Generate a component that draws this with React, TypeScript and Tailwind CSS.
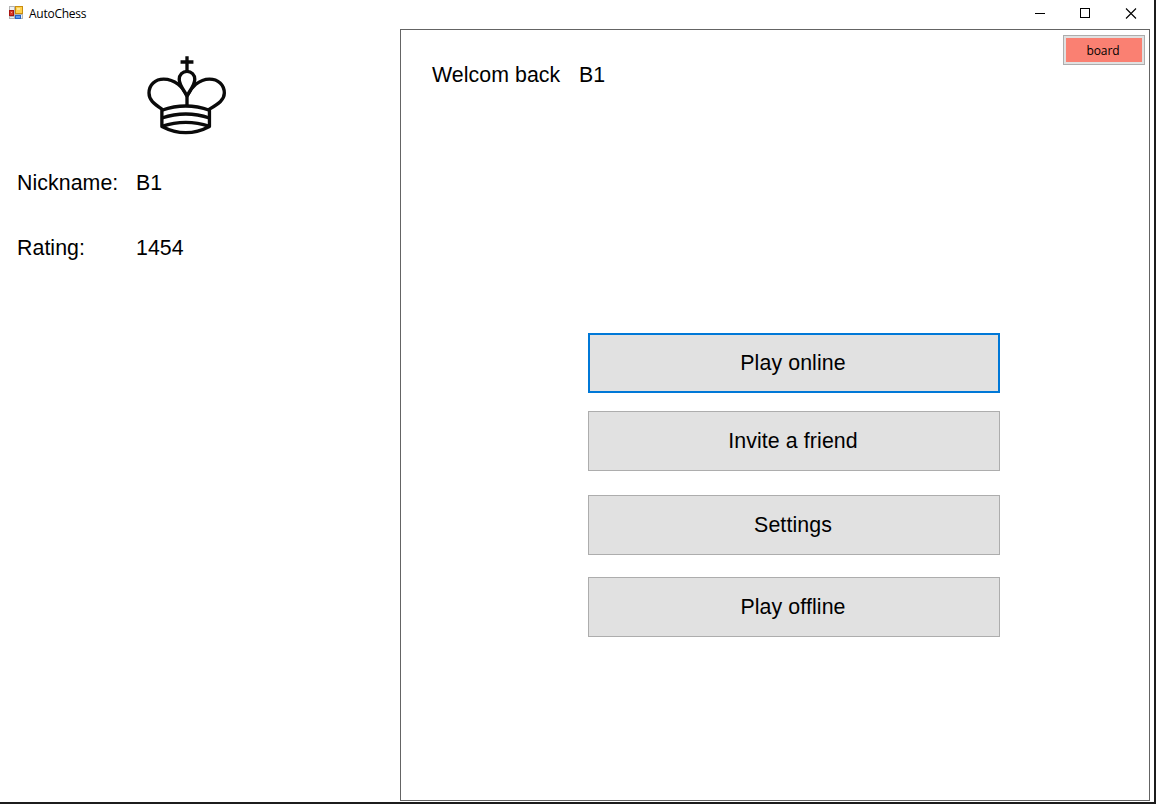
import React from "react";

const label = "text-[21.33px] leading-6 tracking-[0.06px] whitespace-nowrap";

function AppIcon() {
  return (
    <svg width="14" height="14" viewBox="0 0 14 14" shapeRendering="crispEdges">
      <rect x="0.5" y="0.5" width="13" height="12" fill="#eef0f4" stroke="#b4b4b4" />
      <path d="M5.500 1v12M0 10.500h5M5 8.500h8M0 4.500h5" stroke="#b4b4b4" fill="none" />
      <rect x="0" y="4" width="5" height="6" fill="#a81410" />
      <rect x="1" y="5" width="3" height="4" fill="#dc3c28" />
      <rect x="2" y="6" width="1" height="1" fill="#f4a090" />
      <rect x="6" y="0" width="8" height="8" fill="#c98d10" />
      <rect x="7" y="1" width="6" height="6" fill="#ffd04c" />
      <rect x="8" y="2" width="3" height="2" fill="#ffe898" />
      <rect x="6" y="9" width="6" height="4" fill="#2463c4" />
      <rect x="7" y="10" width="4" height="2" fill="#5e99ee" />
    </svg>
  );
}

function King() {
  return (
    <svg width="100" height="100" viewBox="0 0 45 45" fill="#fff" stroke="#0a0a0a" strokeWidth="1.5" strokeLinejoin="round">
      <path d="M22.500 12.300V5.500M19.600 8.100h5.800" fill="none" />
      <path d="M11.200 29.300C7.300 26.800 5.400 25 5.400 22.100C5.400 18.300 8.200 15.800 12 15.800C17 15.800 20.800 19.500 22.500 23.400C24.200 19.500 28 15.800 32.600 15.800C36.500 15.800 39.300 18.300 39.300 22.100C39.300 25 36.900 26.800 32.600 29.300V37.100Q22 42.700 11.200 37.100Z" />
      <path d="M22.500 28V23.400C21.200 20.800 19 18.600 19 15.900C19 13.900 20.500 12.300 22.500 12.300S26 13.900 26 15.900C26 18.600 23.800 20.800 22.500 23.400" />
      <path d="M11.200 29.800Q22 26 32.600 29.800M11.200 33.300Q22 29.700 32.600 33.300M11.200 37.100Q22 33.400 32.600 37.100" fill="none" />
    </svg>
  );
}

function TitleBar() {
  return (
    <header className="flex h-[29px] shrink-0 items-start">
      <div className="pl-[9px] pt-[6px]">
        <AppIcon />
      </div>
      <span className="pl-[6px] pt-[6px] font-['Open_Sans',sans-serif] text-[12px] leading-4 tracking-[-0.25px]">AutoChess</span>
      <div className="ml-auto flex gap-[35px] pr-[17px] pt-2">
        <svg width="10" height="11" shapeRendering="crispEdges">
          <path d="M0 5.500h10" stroke="#000" />
        </svg>
        <svg width="10" height="11" shapeRendering="crispEdges">
          <path d="M0.500 0.500h9v9h-9z" stroke="#000" fill="none" />
        </svg>
        <svg width="12" height="11">
          <path d="M1 0.500l10 10M11 0.500l-10 10" stroke="#000" strokeWidth="1.100" />
        </svg>
      </div>
    </header>
  );
}

function Profile() {
  return (
    <aside className="w-[400px] shrink-0">
      <div className="pl-[137px] pt-[15px]">
        <King />
      </div>
      <dl className="grid grid-cols-[119px_auto] gap-y-[41px] pl-[17px] pt-[27px]">
        <dt className={label}>Nickname:</dt>
        <dd className={label}>B1</dd>
        <dt className={label}>Rating:</dt>
        <dd className={label}>1454</dd>
      </dl>
    </aside>
  );
}

const button = "flex h-[60px] w-full items-center justify-center bg-[#e1e1e1] pr-[2px] pt-[2px] text-[21.33px] tracking-[0.1px]";

function Lobby() {
  return (
    <main className="flex w-[750px] shrink-0 flex-col border border-[#646464]">
      <div className="flex h-[303px] items-start">
        <p className={`${label} w-[147px] pl-[31px] pt-[33px]`}>Welcom back</p>
        <p className={`${label} pl-[31px] pt-[33px]`}>B1</p>
        <button className="ml-auto mr-1 mt-[5px] flex h-[30px] w-[82px] border border-[#adadad] bg-[#e1e1e1] p-[2px]">
          <span className="flex h-full w-full items-center justify-center bg-[#fa8072] pr-[2px] pt-px font-['Open_Sans',sans-serif] text-[12px] leading-4 tracking-[-0.1px]">board</span>
        </button>
      </div>
      <div className="ml-[187px] w-[412px]">
        <button className={`${button} border-2 border-[#0078d7]`}>Play online</button>
        <button className={`${button} mt-[18px] border border-[#adadad]`}>Invite a friend</button>
        <button className={`${button} mt-6 border border-[#adadad]`}>Settings</button>
        <button className={`${button} mt-[22px] border border-[#adadad]`}>Play offline</button>
      </div>
    </main>
  );
}

export default function App() {
  return (
    <div className="h-[804px] w-[1156px] overflow-hidden bg-[#1c1c1c] pb-[2px] pr-[2px] font-['Liberation_Sans',Arial,sans-serif] text-black">
      <div className="flex h-full flex-col bg-white">
        <TitleBar />
        <div className="flex h-[772px]">
          <Profile />
          <Lobby />
        </div>
      </div>
    </div>
  );
}
